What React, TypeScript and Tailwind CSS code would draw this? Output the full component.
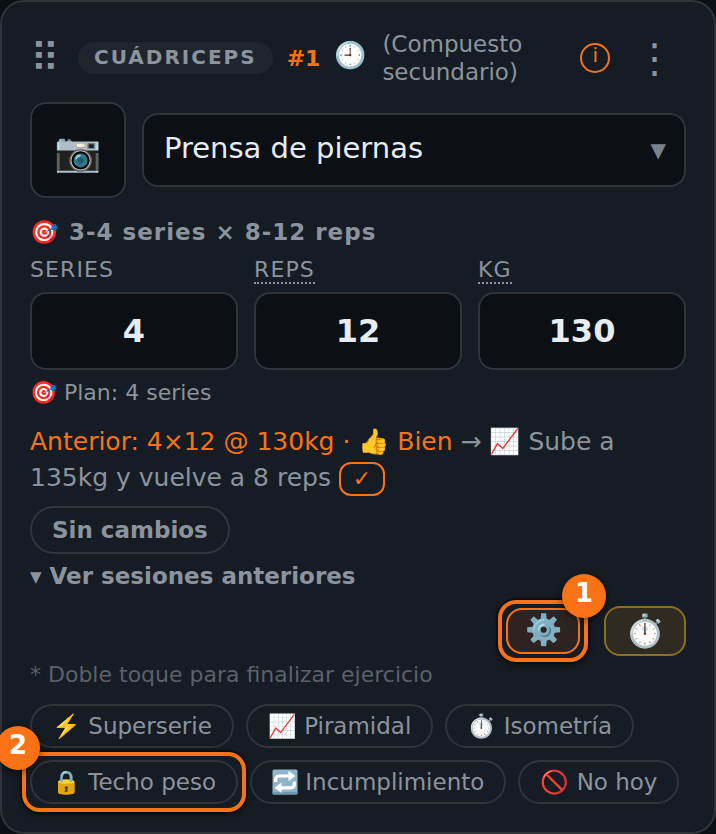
import React, { useState } from 'react';
import clsx from 'clsx';

interface Field {
  id: string;
  label: string;
  value: string;
  hint?: string;
}

interface Chip {
  icon: React.ReactNode;
  label: string;
  step?: string;
}

const RepeatIcon = () => (
  <svg viewBox="0 0 26 26" className="inline-block size-[26px] align-[-5px]" aria-hidden="true">
    <rect x="0.5" y="0.5" width="25" height="25" rx="1.5" fill="#8fb5c6" />
    <rect x="0.5" y="23" width="25" height="2.5" rx="1" fill="#6f98ab" />
    <g fill="none" stroke="#ffffff" strokeWidth="3.2">
      <path d="M3.6 13V10.5Q3.6 7 7.4 7H17.5" />
      <path d="M22.4 12.5V15Q22.4 18.8 18.6 18.8H8.5" />
    </g>
    <path d="M16.5 1.8L23.5 7L16.5 12.2Z" fill="#ffffff" />
    <path d="M9.5 13.4L2.5 18.8L9.5 24Z" fill="#ffffff" />
  </svg>
);

const initialFields: Field[] = [
  { id: 'series', label: 'SERIES', value: '4' },
  { id: 'reps', label: 'REPS', value: '12', hint: 'Repeticiones' },
  { id: 'kg', label: 'KG', value: '130', hint: 'Kilogramos' },
];

const chips: Chip[] = [
  { icon: '⚡️', label: 'Superserie' },
  { icon: '📈', label: 'Piramidal' },
  { icon: '⏱️', label: 'Isometría' },
  { icon: '🔒', label: 'Techo peso', step: '2' },
  { icon: <RepeatIcon />, label: 'Incumplimiento' },
  { icon: '🚫', label: 'No hoy' },
];

// Orange frame with a numbered badge, drawn over the control it wraps
const Highlight = ({ step, side }: { step: string; side: 'left' | 'right' }) => (
  <span className="pointer-events-none absolute -inset-2 z-10 rounded-[18px] border-4 border-[#f97316] shadow-[0_0_0_2px_rgba(0,0,0,0.35),0_2px_8px_rgba(0,0,0,0.5)]">
    <span
      className={clsx(
        'absolute -top-[30px] flex size-11 items-center justify-center rounded-full bg-[#f97316] pb-1.5 text-[26px] font-bold text-white shadow-[0_2px_8px_rgba(0,0,0,0.5)]',
        side === 'left' ? '-left-[30px]' : '-right-[22px]'
      )}
    >
      {step}
    </span>
  </span>
);

const App = () => {
  const [fields, setFields] = useState(initialFields);
  const [exercise, setExercise] = useState('Prensa de piernas');

  const handleFieldChange = (index: number, value: string) => {
    setFields(fields.map((field, i) => (i === index ? { ...field, value } : field)));
  };

  return (
    <main className="overflow-hidden bg-[#0c1014] font-['DejaVu_Sans',sans-serif] text-[#8b949e]">
      <section className="rounded-3xl border-2 border-[#2f343a] bg-[#161c23] p-7">
        <header className="flex items-center">
          <button aria-label="Mover ejercicio" className="w-7 text-center text-[40px] leading-10">
            ⠿
          </button>
          <span className="ml-5 rounded-full bg-[#1f252c] px-4 pb-0.5 text-[20px] leading-[30px] font-bold tracking-widest">
            CUÁDRICEPS
          </span>
          <span className="ml-3.5 text-[22px] font-bold text-[#f97316]">#1</span>
          <span className="ml-3.5 pb-1.5 text-[26px]">🕘</span>
          <span className="ml-4 w-[180px] text-[23px] leading-7">(Compuesto secundario)</span>
          <button
            aria-label="Información"
            className="ml-[18px] flex size-[30px] items-center justify-center rounded-full border-2 border-[#f97316] pb-1.5 text-[20px] text-[#f97316]"
          >
            i
          </button>
          <button aria-label="Más opciones" className="ml-6 w-10 text-center text-[40px] leading-10">
            ⋮
          </button>
        </header>

        <div className="mt-4 flex items-center gap-4">
          <button
            aria-label="Foto del ejercicio"
            className="flex size-24 shrink-0 items-center justify-center rounded-2xl border-2 border-[#2f343a] bg-[#0c1014] pt-1 pr-0.5 text-[38px]"
          >
            📷
          </button>
          <div className="relative flex-1">
            <select
              aria-label="Ejercicio"
              value={exercise}
              onChange={(e) => setExercise(e.target.value)}
              className="block h-[74px] w-full appearance-none rounded-2xl border-2 border-[#2f343a] bg-[#0c1014] px-5 pb-0.5 text-[29px] text-[#e6edf3]"
            >
              <option>Prensa de piernas</option>
            </select>
            <span className="pointer-events-none absolute inset-y-0 right-5 flex items-center text-[20px] text-[#7a838c]">▼</span>
          </div>
        </div>

        <p className="mt-5 text-[23px] leading-7 font-bold tracking-[1px]">🎯 3-4 series × 8-12 reps</p>

        <div className="mt-2.5 grid grid-cols-3 gap-4">
          {fields.map((field, index) => (
            <div key={field.id}>
              <label htmlFor={field.id} className="block text-[22px] leading-7 tracking-wider">
                {field.hint ? (
                  <abbr title={field.hint} className="border-b-2 border-dotted border-[#8b949e] no-underline">
                    {field.label}
                  </abbr>
                ) : (
                  field.label
                )}
              </label>
              <input
                id={field.id}
                inputMode="numeric"
                value={field.value}
                onChange={(e) => handleFieldChange(index, e.target.value)}
                className="mt-2 block h-[78px] w-full rounded-2xl border-2 border-[#2f343a] bg-[#0c1014] text-center text-[32px] font-bold text-[#e6edf3]"
              />
            </div>
          ))}
        </div>

        <p className="mt-2 text-[22px] leading-[30px]">🎯 Plan: 4 series</p>

        <p className="mt-4 text-[25px] leading-9">
          <span className="text-[#f97316]">Anterior: 4×12 @ 130kg · 👍 Bien</span> → 📈 Sube a 135kg y vuelve a 8 reps{' '}
          <button
            aria-label="Aplicar sugerencia"
            className="h-[34px] w-[46px] rounded-xl border-2 border-[#f97316] align-middle text-[22px] leading-7 text-[#f97316]"
          >
            ✓
          </button>
        </p>

        <button className="mt-2.5 block h-12 rounded-full border-2 border-[#2f343a] px-5 text-[23px] font-bold">
          Sin cambios
        </button>
        <button className="mt-2 block text-[23px] leading-7 font-bold">▾ Ver sesiones anteriores</button>

        <div className="mt-4 flex items-center justify-end gap-6">
          <div className="relative">
            <button
              aria-label="Ajustes"
              className="flex h-[46px] w-[74px] items-center justify-center rounded-2xl border-2 border-[#f97316] bg-[#2d2422] pb-1 text-[30px]"
            >
              ⚙️
            </button>
            <Highlight step="1" side="right" />
          </div>
          <button
            aria-label="Temporizador"
            className="flex h-[50px] w-[82px] items-center justify-center rounded-2xl border-2 border-[#8a6f24] bg-[#2f2b21] text-[32px]"
          >
            ⏱️
          </button>
        </div>

        <p className="mt-1 text-[22px] leading-[30px] text-[#5b6169]">* Doble toque para finalizar ejercicio</p>

        <div className="mt-3.5 flex flex-wrap gap-3">
          {chips.map((chip) => (
            <div key={chip.label} className="relative">
              <button className="block h-11 rounded-full border-2 border-[#2f343a] px-5 text-[23px] whitespace-nowrap">
                {chip.icon} {chip.label}
              </button>
              {chip.step && <Highlight step={chip.step} side="left" />}
            </div>
          ))}
        </div>
      </section>
    </main>
  );
};

export default App;
